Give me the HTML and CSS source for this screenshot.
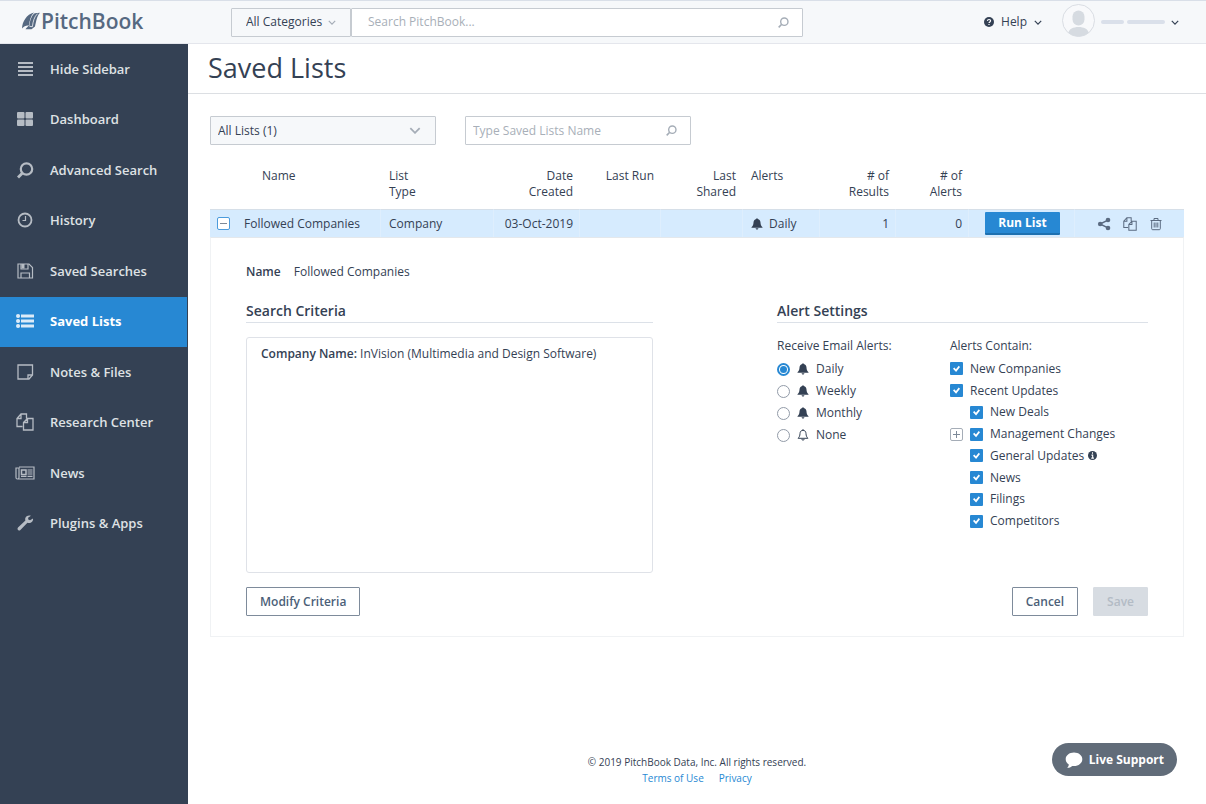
FILE: index.html
```html
<!DOCTYPE html>
<html lang="en">
<head>
<meta charset="utf-8">
<title>Saved Lists</title>
<link rel="stylesheet" href="styles.css">
</head>
<body class="app">
<svg class="sprite" aria-hidden="true">
  <symbol id="chevron" viewBox="0 0 10 6"><path d="M1 1l4 4 4-4" fill="none" stroke="currentColor" stroke-width="1.5"/></symbol>
  <symbol id="search" viewBox="0 0 16 16"><circle cx="9.2" cy="6.8" r="5.3" fill="none" stroke="currentColor" stroke-width="2"/><path d="M5.4 10.6L1 15" stroke="currentColor" stroke-width="2.4"/></symbol>
  <symbol id="bell" viewBox="0 0 12 12"><path d="M6 .3c.5 0 .8.3.8.8 1.7.4 2.6 1.700 2.700 3.400.1 2.400.6 3.500 2 4.700v.6H.5v-.6c1.400-1.200 1.900-2.300 2-4.700.1-1.700 1-3 2.700-3.400 0-.5.3-.8.8-.8zM4.600 10.300h2.800c-.1.800-.6 1.300-1.400 1.300s-1.300-.5-1.400-1.300z" fill="currentColor"/></symbol>
  <symbol id="bell-off" viewBox="0 0 12 12"><path d="M6 1.300c-1.900 0-2.900 1.300-3 3.300-.1 2.200-.6 3.300-1.900 4.700h9.800C9.600 7.900 9.100 6.800 9 4.600c-.1-2-1.100-3.300-3-3.300zM6 .2v1.200M4.800 10c.1.800.5 1.200 1.200 1.200s1.100-.4 1.200-1.200" fill="none" stroke="currentColor"/></symbol>
  <symbol id="copy" viewBox="0 0 18 18"><path d="M6.500 13.500H1V5.500L5 1h5.500v4.500M1 5.500h4V1M7.500 9.500l4-4H17V17H7.500zM7.500 9.500h4v-4" fill="none" stroke="currentColor" stroke-width="1.300"/></symbol>
</svg>

<header class="topbar">
  <a class="logo" href="#">
    <svg class="logo-mark" viewBox="0 0 18 18" aria-hidden="true"><path d="M0 16.500C.3 9.500 4.500 2.500 12 .5 8.800 3.500 7.500 8.500 7 13.500 4.500 13 2 14 0 16.500z" fill="currentColor"/><path d="M7.500 13.500C8 8.500 9.300 3.800 12.700 1.300L18 .8C14.800 4 14.200 9.500 13 14.500l-3.500 2.800H3.500C4.800 15.500 6 14 7.500 13.500z" fill="currentColor"/><path d="M7.400 14.300l3 .4C11 9.500 12.300 4.500 15.600 1.600" fill="none" stroke="#f6f8fa" stroke-width=".8"/></svg>
    <span>PitchBook</span>
  </a>
  <form class="search">
    <div class="picker picker-category">
      <select aria-label="Category"><option>All Categories</option></select>
      <svg class="picker-arrow"><use href="#chevron"/></svg>
    </div>
    <label class="field search-field">
      <input type="text" placeholder="Search PitchBook..." aria-label="Search PitchBook">
      <svg class="field-icon"><use href="#search"/></svg>
    </label>
  </form>
  <button class="help" type="button">
    <svg class="help-icon" viewBox="0 0 10 10"><circle cx="5" cy="5" r="5" fill="currentColor"/><path d="M3.400 3.900C3.500 2.800 4.200 2.500 5 2.500s1.600.5 1.600 1.300C6.600 4.900 5 4.900 5 6.100M5 6.900v1.100" fill="none" stroke="#fff" stroke-width="1.200"/></svg>
    <span>Help</span>
    <svg class="caret"><use href="#chevron"/></svg>
  </button>
  <button class="profile" type="button" aria-label="Account">
    <svg class="avatar" viewBox="0 0 33 33"><circle cx="16.500" cy="16.500" r="16" fill="#f8f9fb" stroke="#d9dde3"/><rect x="10.500" y="6.500" width="12" height="15" rx="6" fill="#d6dbe1"/><path d="M6.500 29c0-4 5-6 10-6s10 2 10 6c-6 4.500-14 4.500-20 0z" fill="#d6dbe1"/></svg>
    <span class="profile-name"><i class="bar bar-first"></i><i class="bar bar-last"></i></span>
    <svg class="caret"><use href="#chevron"/></svg>
  </button>
</header>

<nav class="sidebar">
  <ul class="menu">
    <li><a href="#"><svg viewBox="0 0 20 20"><path d="M3 4h15M3 8h15M3 12h15M3 16h15" stroke="currentColor" stroke-width="2"/></svg>Hide Sidebar</a></li>
    <li><a href="#"><svg viewBox="0 0 20 20" fill="currentColor"><rect x="2" y="3" width="7.500" height="6.500" rx="1"/><rect x="10.500" y="3" width="7.500" height="6.500" rx="1"/><rect x="2" y="10.500" width="7.500" height="6.500" rx="1"/><rect x="10.500" y="10.500" width="7.500" height="6.500" rx="1"/></svg>Dashboard</a></li>
    <li><a href="#"><svg viewBox="0 0 20 20" fill="none" stroke="currentColor"><circle cx="11.500" cy="9" r="5.700" stroke-width="2.200"/><path d="M7.500 13L3 17.500" stroke-width="2.800"/></svg>Advanced Search</a></li>
    <li><a href="#"><svg viewBox="0 0 20 20" fill="none" stroke="currentColor"><circle cx="10" cy="10" r="6.500" stroke-width="1.800"/><path d="M10.500 6v4.500H7.500" stroke-width="1.200"/></svg>History</a></li>
    <li><a href="#"><svg viewBox="0 0 20 20" fill="none" stroke="currentColor" stroke-width="1.200"><path d="M3 3h11l3.500 3.500V17H3z"/><path d="M6 3v5h7V3M6 17v-5h8.500v5"/><path d="M8 3v4.500" stroke-width="3"/></svg>Saved Searches</a></li>
    <li><a class="active" href="#" aria-current="page"><svg viewBox="0 0 20 20" stroke="currentColor"><path d="M6 5h13M6 10h13M6 15h13" stroke-width="3"/><path d="M3 5h.1M3 10h.1M3 15h.1" stroke-width="4" stroke-linecap="round"/></svg>Saved Lists</a></li>
    <li><a href="#"><svg viewBox="0 0 20 20" fill="none" stroke="currentColor" stroke-width="1.300"><path d="M3 3h14.500v10l-3.500 4H3z"/><path d="M13 17v-4h4.500"/></svg>Notes &amp; Files</a></li>
    <li><a href="#"><svg viewBox="0 0 20 20"><use href="#copy" x="1" y="1" width="18" height="18"/></svg>Research Center</a></li>
    <li><a href="#"><svg viewBox="0 0 20 20" fill="none" stroke="currentColor" stroke-width="1.200"><path d="M4 4h15v12H2.500Q1 16 1 14.500V5h3v9.500Q4 16 2.500 16"/><rect x="6.500" y="7" width="4.500" height="4.500" stroke-width="1.500"/><path d="M12.500 7h5M12.500 9h5M12.500 11h5M6 13.300h5.500M12.500 13.300h5"/></svg>News</a></li>
    <li><a href="#"><svg viewBox="0 0 20 20" fill="currentColor"><path d="M18 5.500l-3 1.700-1.700-.6-.2-1.900 2.800-1.900C13.500 2 10.700 3 10.200 5.600c-.1.700 0 1.400.2 2L3 14.600c-1.500 1.700.7 4 2.400 2.400l7-7.200c3.200 1 6.200-1.300 5.600-4.300z"/></svg>Plugins &amp; Apps</a></li>
  </ul>
</nav>

<main class="content">
  <h1 class="title">Saved Lists</h1>
  <div class="body">
    <div class="filters">
      <div class="picker picker-lists">
        <select aria-label="Lists"><option>All Lists (1)</option></select>
        <svg class="picker-arrow"><use href="#chevron"/></svg>
      </div>
      <label class="field">
        <input type="text" placeholder="Type Saved Lists Name" aria-label="Saved list name">
        <svg class="field-icon"><use href="#search"/></svg>
      </label>
    </div>

    <table class="lists">
      <colgroup><col class="c-name"><col class="c-type"><col class="c-date"><col class="c-run"><col class="c-shared"><col class="c-alerts"><col class="c-results"><col class="c-count"><col class="c-action"><col class="c-tools"></colgroup>
      <thead>
        <tr>
          <th class="head-name">Name</th><th>List<br>Type</th><th class="num">Date<br>Created</th><th class="num">Last Run</th><th class="num">Last<br>Shared</th><th>Alerts</th><th class="num"># of<br>Results</th><th class="num"># of<br>Alerts</th><th></th><th></th>
        </tr>
      </thead>
      <tbody>
        <tr class="row">
          <td><div class="name-cell"><button class="toggle toggle-open" type="button" aria-label="Collapse"></button><span>Followed Companies</span></div></td>
          <td>Company</td><td class="num">03-Oct-2019</td><td></td><td></td>
          <td><div class="alert-cell"><svg class="bell"><use href="#bell"/></svg><span>Daily</span></div></td>
          <td class="num">1</td><td class="num">0</td>
          <td class="action-cell"><button class="run" type="button">Run List</button></td>
          <td><div class="tools">
            <button type="button" aria-label="Share"><svg viewBox="0 0 14 14"><path d="M11.500 2.800L3 7l8.500 4.200" fill="none" stroke="currentColor" stroke-width="1.500"/><g fill="currentColor"><circle cx="11" cy="3" r="2.300"/><circle cx="3.200" cy="7" r="2.300"/><circle cx="11" cy="11" r="2.300"/></g></svg></button>
            <button type="button" aria-label="Copy"><svg><use href="#copy"/></svg></button>
            <button type="button" aria-label="Delete"><svg viewBox="0 0 14 14" fill="none" stroke="currentColor"><path d="M1.500 3.500h11M5 3.500v-2h4v2M2.700 3.500v8.200q0 1 1 1h6.600q1 0 1-1V3.500M5.200 5.500v5M7 5.500v5M8.800 5.500v5"/></svg></button>
          </div></td>
        </tr>
        <tr>
          <td class="detail" colspan="10">
            <dl class="summary"><dt>Name</dt><dd>Followed Companies</dd></dl>
            <div class="panels">
              <section>
                <h2 class="heading">Search Criteria</h2>
                <div class="criteria"><b>Company Name:</b> InVision (Multimedia and Design Software)</div>
              </section>
              <section>
                <h2 class="heading">Alert Settings</h2>
                <div class="settings">
                  <fieldset class="group">
                    <legend>Receive Email Alerts:</legend>
                    <div class="radios">
                      <label class="option"><input type="radio" name="freq" checked><svg class="bell"><use href="#bell"/></svg>Daily</label>
                      <label class="option"><input type="radio" name="freq"><svg class="bell"><use href="#bell"/></svg>Weekly</label>
                      <label class="option"><input type="radio" name="freq"><svg class="bell"><use href="#bell"/></svg>Monthly</label>
                      <label class="option"><input type="radio" name="freq"><svg class="bell"><use href="#bell-off"/></svg>None</label>
                    </div>
                  </fieldset>
                  <fieldset class="group">
                    <legend>Alerts Contain:</legend>
                    <div class="checks">
                      <label class="option"><input type="checkbox" checked>New Companies</label>
                      <label class="option"><input type="checkbox" checked>Recent Updates</label>
                      <label class="option nested"><input type="checkbox" checked>New Deals</label>
                      <div class="expandable"><button class="toggle toggle-closed" type="button" aria-label="Expand"></button><label class="option"><input type="checkbox" checked>Management Changes</label></div>
                      <label class="option nested"><input type="checkbox" checked>General Updates<svg class="info" viewBox="0 0 10 10"><circle cx="5" cy="5" r="5" fill="currentColor"/><path d="M5 1.500v1.500M3.800 4.600h1.400v3.200M3.600 7.900h3" fill="none" stroke="#fff" stroke-width="1.200"/></svg></label>
                      <label class="option nested"><input type="checkbox" checked>News</label>
                      <label class="option nested"><input type="checkbox" checked>Filings</label>
                      <label class="option nested"><input type="checkbox" checked>Competitors</label>
                    </div>
                  </fieldset>
                </div>
              </section>
            </div>
            <div class="buttons">
              <button class="button modify" type="button">Modify Criteria</button>
              <button class="button" type="button">Cancel</button>
              <button class="button" type="button" disabled>Save</button>
            </div>
          </td>
        </tr>
      </tbody>
    </table>
  </div>

  <footer class="footer">
    <p>© 2019 PitchBook Data, Inc. All rights reserved.</p>
    <p class="legal"><a href="#">Terms of Use</a><a href="#">Privacy</a></p>
  </footer>
</main>

<button class="support" type="button"><svg viewBox="0 0 18 18"><path d="M9 1.500c4.700 0 8.300 2.900 8.300 6.700S13.700 15 9 15c-.6 0-1.200 0-1.700-.1-1.500 1.200-3 1.800-5 2 .9-.9 1.400-1.900 1.500-3.300C2 12.400.7 10.500.7 8.200.7 4.400 4.300 1.500 9 1.500z" fill="#fff"/></svg>Live Support</button>
</body>
</html>
```
FILE: styles.css
```css
* { box-sizing: border-box; }

.app {
  margin: 0;
  min-height: 100vh;
  display: grid;
  grid-template: 44px 1fr / 188px minmax(0, 1fr);
  font-family: "Open Sans", sans-serif;
  font-size: 12px;
  line-height: 16px;
  color: #344154;
  background: #fff;
}
.sprite { display: none; }
button, input, select { font: inherit; color: inherit; margin: 0; }
button { padding: 0; border: 0; background: none; cursor: pointer; }
h1, h2, p, ul, dl, dd, fieldset { margin: 0; padding: 0; border: 0; }

/* Top bar */
.topbar {
  grid-column: 1 / -1;
  display: flex;
  align-items: center;
  padding-left: 22px;
  padding-right: 27px;
  background: #f6f8fa;
  border-top: 1px solid #d9dfe8;
  border-bottom: 1px solid #e4e6ec;
}
.logo {
  width: 209px;
  display: flex;
  align-items: center;
  gap: 1px;
  padding-bottom: 2px;
  color: #566981;
  font-size: 21px;
  line-height: 28px;
  font-weight: 600;
  text-decoration: none;
}
.logo-mark { width: 18px; height: 18px; }
.search { display: flex; width: 572px; }
.picker { position: relative; height: 29px; }
.picker select {
  width: 100%;
  height: 100%;
  padding: 0 7px;
  appearance: none;
  background: #f6f8fa;
  border: 1px solid #c6cbd1;
  border-radius: 1px;
}
.picker-arrow {
  position: absolute;
  right: 15px;
  top: 11px;
  width: 12px;
  height: 7px;
  color: #a5adb7;
  pointer-events: none;
}
.picker-category { width: 120px; }
.picker-category select { padding: 0 14px; }
.picker-category .picker-arrow { width: 8px; }
.field {
  display: flex;
  align-items: center;
  width: 226px;
  height: 29px;
  padding: 0 13px 0 7px;
  background: #fff;
  border: 1px solid #c6cbd1;
  border-radius: 1px;
}
.search-field { flex: 1; padding-left: 16px; }
.field input { flex: 1; min-width: 0; padding: 0; border: 0; outline: 0; background: none; }
.field input::placeholder { color: #a8afb8; opacity: 1; }
.field-icon { width: 11px; height: 11px; color: #a5adb7; }
.help { display: flex; align-items: center; margin-left: auto; gap: 7px; }
.help-icon { width: 10px; height: 10px; }
.caret { width: 8px; height: 5px; }
.profile { display: flex; align-items: center; margin-left: 20px; gap: 6px; }
.avatar { width: 33px; height: 33px; margin-bottom: 4px; }
.profile-name { display: flex; gap: 3px; width: 64px; }
.bar { height: 4px; border-radius: 2px; background: #dae0ea; }
.bar-first { width: 23px; }
.bar-last { width: 38px; }

/* Sidebar */
.sidebar { background: #344154; }
.menu { display: grid; grid-auto-rows: 1fr; height: 505px; list-style: none; }
.menu a {
  display: flex;
  align-items: center;
  gap: 15px;
  height: 100%;
  padding-left: 15px;
  padding-bottom: 1px;
  margin-right: 1px;
  color: #dfe1e4;
  font-size: 13px;
  font-weight: 600;
  text-decoration: none;
}
.menu svg { width: 20px; height: 20px; color: #b6bcc4; }
.menu .active { background: #2788d3; color: #fff; font-weight: 700; }
.menu .active svg { color: #dcebf8; }

/* Page */
.content { display: flex; flex-direction: column; }
.title {
  height: 50px;
  padding-left: 20px;
  border-bottom: 1px solid #dcdfe3;
  font-size: 27px;
  line-height: 48px;
  font-weight: 400;
}
.body { padding: 22px 22px 0; }
.filters { display: flex; gap: 29px; }
.picker-lists { width: 226px; }

/* Lists table */
.lists { width: 100%; margin-top: 23px; table-layout: fixed; border-collapse: separate; border-spacing: 0; }
.c-name { width: 171px; }
.c-type { width: 113px; }
.c-date { width: 86px; }
.c-run { width: 81px; }
.c-shared { width: 82px; }
.c-alerts { width: 77px; }
.c-results { width: 76px; }
.c-count { width: 73px; }
.c-action { width: 106px; }
.c-tools { width: 109px; }
.lists th { padding: 0 7px 9px 8px; font-weight: 500; text-align: left; vertical-align: top; }
.lists .head-name { padding-left: 52px; }
.row td {
  height: 28px;
  padding: 0 6px 0 8px;
  background: #d6ebfe;
  border-top: 1px solid #d6dfe8;
  border-right: 1px solid #deeefd;
}
.lists .num { text-align: right; }
.row td:last-child { border-right: 0; }
.name-cell { display: flex; align-items: center; gap: 14px; }
.row td:first-child { padding-left: 7px; }
.toggle {
  position: relative;
  flex: none;
  width: 13px;
  height: 13px;
  background: #fff;
  border: 1px solid #a5adb7;
  border-radius: 2px;
}
.toggle::before, .toggle-closed::after {
  content: "";
  position: absolute;
  left: 2px;
  top: 5px;
  width: 7px;
  height: 1px;
  background: #7d8998;
}
.toggle-closed::after { transform: rotate(90deg); }
.toggle-open { border-color: #4b9bdc; }
.bell { flex: none; width: 12px; height: 12px; }
.alert-cell { display: flex; align-items: center; gap: 6px; }
.row .action-cell { padding: 0 14px 0 16px; }
.run {
  display: block;
  width: 100%;
  height: 23px;
  color: #fff;
  font-weight: 700;
  background: #2788d3;
  border-bottom: 2px solid #1d70b0;
  border-radius: 1px;
}
.tools { display: flex; justify-content: flex-end; gap: 12px; padding-right: 15px; color: #5b6b81; }
.tools button, .tools svg { display: block; width: 14px; height: 14px; }

/* Expanded row */
.lists .detail { padding: 26px 35px 20px; border: 1px solid #f0f2f4; border-top-color: #e4e8ec; }
.summary { display: flex; gap: 13px; }
.summary dt { font-weight: 600; }
.panels {
  display: grid;
  grid-template-columns: 407fr 371fr;
  gap: 124px;
  margin-top: 22px;
}
.heading {
  padding-bottom: 2px;
  border-bottom: 1px solid #dce1e8;
  font-size: 14px;
  line-height: 18px;
  font-weight: 600;
}
.criteria {
  height: 236px;
  margin-top: 14px;
  padding: 8px 14px;
  border: 1px solid #dfe2e8;
  border-radius: 3px;
}
.criteria b { font-weight: 600; }
.settings { display: grid; grid-template-columns: 173fr 198fr; padding-top: 15px; }
.group { min-width: 0; }
.group legend { padding: 0 0 4px; font-weight: 500; }
.option { display: flex; align-items: center; white-space: nowrap; }
.radios .option { height: 22px; gap: 7px; }
.checks { display: grid; grid-auto-rows: 1fr; height: 174px; }
.checks .option { gap: 7px; }
.nested { padding-left: 20px; }
.expandable { display: flex; align-items: center; gap: 7px; }
.option input {
  appearance: none;
  flex: none;
  display: grid;
  place-content: center;
  width: 13px;
  height: 13px;
  background: #fff;
  border: 1px solid #929ba8;
}
.option input[type="radio"] { border-radius: 50%; }
.option input[type="radio"]:checked { border: 2px solid #2788d3; }
.option input[type="radio"]:checked::before {
  content: "";
  width: 7px;
  height: 7px;
  border-radius: 50%;
  background: #2788d3;
}
.option input[type="checkbox"] { border: 0; border-radius: 1px; background: #2788d3; }
.option input[type="checkbox"]::before {
  content: "";
  width: 7px;
  height: 7px;
  background: #fff;
  clip-path: polygon(0 48%, 18% 32%, 42% 56%, 82% 6%, 100% 24%, 44% 94%);
}
.info { width: 9px; height: 9px; margin-left: -3px; }

.buttons { display: flex; gap: 15px; margin-top: 14px; }
.button {
  height: 29px;
  padding: 0 13px;
  color: #4c5f78;
  font-weight: 600;
  background: #fff;
  border: 1px solid #7e8b9b;
  border-radius: 1px;
}
.button:disabled { color: #b3bbc5; background: #d7dce2; border-color: #d7dce2; cursor: default; }
.modify { margin-right: auto; }

/* Footer */
.footer { margin-top: auto; padding-bottom: 18px; font-size: 10px; text-align: center; }
.legal { display: flex; justify-content: center; gap: 15px; }
.legal a { color: #2788d3; text-decoration: none; }
.support {
  position: fixed;
  right: 29px;
  bottom: 28px;
  display: flex;
  align-items: center;
  gap: 6px;
  height: 33px;
  padding: 0 13px;
  color: #fff;
  font-weight: 700;
  background: #616c79;
  border-radius: 17px;
}
.support svg { width: 18px; height: 18px; }
```
